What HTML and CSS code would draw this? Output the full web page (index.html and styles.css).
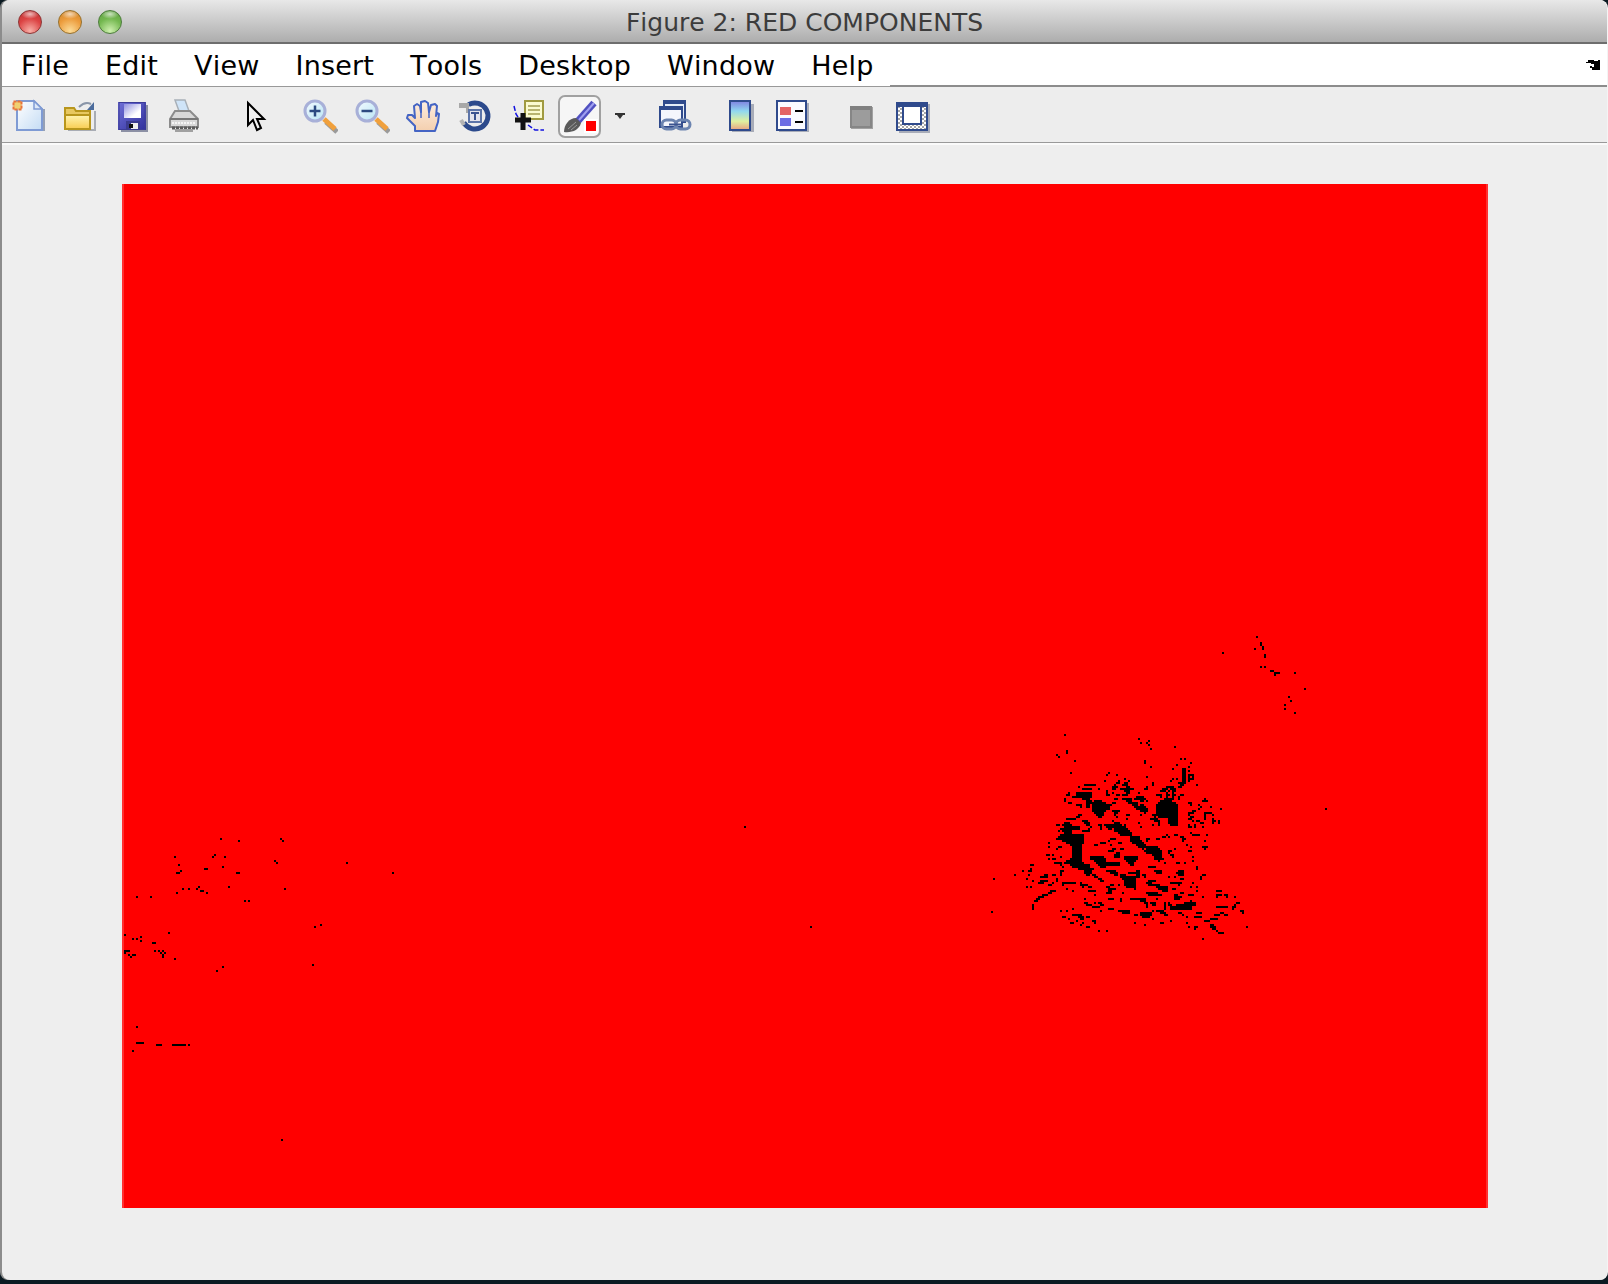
FILE: index.html
```html
<!DOCTYPE html>
<html>
<head>
    <meta charset="UTF-8"/>
    <title>Figure 2: RED COMPONENTS</title>
    <link rel="stylesheet" href="styles.css">
</head>
<body>
<div class="window">

    <div class="titlebar">
        <div class="lights">
            <span class="light light-red"></span>
            <span class="light light-amber"></span>
            <span class="light light-green"></span>
        </div>
        <div class="title">Figure 2: RED COMPONENTS</div>
        <div></div>
    </div>

    <div class="menubar">
        <nav class="menu">
            <a>File</a>
            <a>Edit</a>
            <a>View</a>
            <a>Insert</a>
            <a>Tools</a>
            <a>Desktop</a>
            <a>Window</a>
            <a>Help</a>
        </nav>
        <div class="menu-rest">
            <svg class="dock" width="14" height="10" viewBox="0 0 14 10" shape-rendering="crispEdges">
                <path d="M2 0h6v1h4v-1h2v10h-8v-2h-2v-2h2v1h2v-3h-3v-1h-5v-1h2zM0 2h1v1h-1z" fill="#000"/>
            </svg>
        </div>
    </div>

    <div class="toolbar">
        <!-- new -->
        <svg class="tool" width="36" height="36" viewBox="0 0 36 36">
            <defs>
                <linearGradient id="sheet" x1="0" y1="0" x2="1" y2="1">
                    <stop offset="0" stop-color="#fff"/>
                    <stop offset="1" stop-color="#c4dcf4"/>
                </linearGradient>
                <linearGradient id="folder" x1="0" y1="0" x2="0" y2="1">
                    <stop offset="0" stop-color="#fff4b0"/>
                    <stop offset="1" stop-color="#f8cc50"/>
                </linearGradient>
                <linearGradient id="disk" x1="0" y1="0" x2="1" y2="1">
                    <stop offset="0" stop-color="#7070d8"/>
                    <stop offset="1" stop-color="#30309c"/>
                </linearGradient>
                <linearGradient id="label" x1="0" y1="0" x2="1" y2="1">
                    <stop offset="0" stop-color="#9090e0"/>
                    <stop offset=".7" stop-color="#fff"/>
                </linearGradient>
                <linearGradient id="lens" x1="0" y1="0" x2="1" y2="1">
                    <stop offset="0" stop-color="#f4fbff"/>
                    <stop offset="1" stop-color="#b8e4f4"/>
                </linearGradient>
                <linearGradient id="skin" x1="0" y1="0" x2="0" y2="1">
                    <stop offset="0" stop-color="#fdeee0"/>
                    <stop offset="1" stop-color="#f4cfae"/>
                </linearGradient>
                <linearGradient id="rainbow" x1="0" y1="0" x2="0" y2="1">
                    <stop offset="0" stop-color="#8080e0"/>
                    <stop offset=".35" stop-color="#90d8f0"/>
                    <stop offset=".7" stop-color="#e0f0a0"/>
                    <stop offset="1" stop-color="#e8a080"/>
                </linearGradient>
                <pattern id="checks" width="4" height="4" patternUnits="userSpaceOnUse">
                    <rect width="4" height="4" fill="#fff"/>
                    <rect width="2" height="2" fill="#a8a8a8"/>
                    <rect x="2" y="2" width="2" height="2" fill="#a8a8a8"/>
                </pattern>
            </defs>
            <path d="M10 33h25v-22h-2v20h-23z" fill="#95a0b5"/>
            <path d="M7 3h17l8 8v21h-25z" fill="url(#sheet)" stroke="#7f9bd4" stroke-width="2"/>
            <path d="M24 3v8h8z" fill="#dce8f8" stroke="#7f9bd4" stroke-width="1.5"/>
            <rect x="3.500" y="3.500" width="8" height="8" fill="#f0d070" stroke="#e8743c" stroke-width="2" stroke-dasharray="3 1"/>
        </svg>
        <!-- open -->
        <svg class="tool" width="36" height="36" viewBox="0 0 36 36">
            <path d="M6 33h28v-20h-2v18h-26z" fill="#a8acb4"/>
            <path d="M3 10h9l2 3h14v18h-25z" fill="#e8c860" stroke="#b8961c" stroke-width="2"/>
            <path d="M3 17h25v14h-25z" fill="url(#folder)" stroke="#b8961c" stroke-width="2"/>
            <path d="M17 9q6-6 12-3" fill="none" stroke="#8a96a8" stroke-width="2"/>
            <path d="M32 4v8h-7z" fill="#4c6c9c"/>
        </svg>
        <!-- save -->
        <svg class="tool" width="36" height="36" viewBox="0 0 36 36">
            <path d="M7 34h27v-27h-2v25h-25z" fill="#8c90a4"/>
            <rect x="4" y="4" width="28" height="28" fill="url(#disk)"/>
            <rect x="5" y="4.500" width="26" height="27" fill="none" stroke="#3c3c98" stroke-width="1"/>
            <rect x="10" y="6" width="17" height="14" fill="url(#label)"/>
            <rect x="12" y="23" width="14" height="9" fill="#3c3c90"/>
            <rect x="17" y="25" width="7" height="6" fill="#f0f0f0"/>
            <rect x="15" y="26" width="4" height="4" fill="#111"/>
        </svg>
        <!-- print -->
        <svg class="tool" width="36" height="36" viewBox="0 0 36 36">
            <path d="M9 2h10l4 11h-10z" fill="#cfe4f8" stroke="#a8b0b8" stroke-width="1.500"/>
            <path d="M9 13h15l8 8v8h-28v-8z" fill="#d8d8d8" stroke="#8c8c8c" stroke-width="2"/>
            <path d="M4 21h28" stroke="#787878" stroke-width="2"/>
            <path d="M6 25h24" stroke="#f4f4f4" stroke-width="2" stroke-dasharray="2 1"/>
            <path d="M6 30h26" stroke="#5c5c5c" stroke-width="3" stroke-dasharray="3 1"/>
            <rect x="9" y="31" width="18" height="3" fill="#a0a0a0"/>
        </svg>

        <!-- pointer -->
        <svg class="tool tool-pointer" width="36" height="36" viewBox="0 0 36 36">
            <path d="M9 5v22l5-5 4 10 4-2-4-9h7z" fill="#f2f2f2" stroke="#000" stroke-width="2" stroke-linejoin="miter"/>
        </svg>

        <!-- zoom in -->
        <svg class="tool tool-zoom" width="36" height="36" viewBox="0 0 36 36">
            <path d="M24 24l11 10" stroke="#9a9a9a" stroke-width="5"/>
            <path d="M22 21l11 10" stroke="#f0a03c" stroke-width="5"/>
            <circle cx="13" cy="13" r="10" fill="url(#lens)" stroke="#a8b0d8" stroke-width="3"/>
            <path d="M7.500 13h11M13 7.500v11" stroke="#2c4a80" stroke-width="2.500"/>
        </svg>
        <!-- zoom out -->
        <svg class="tool" width="36" height="36" viewBox="0 0 36 36">
            <path d="M24 24l11 10" stroke="#9a9a9a" stroke-width="5"/>
            <path d="M22 21l11 10" stroke="#f0a03c" stroke-width="5"/>
            <circle cx="13" cy="13" r="10" fill="url(#lens)" stroke="#a8b0d8" stroke-width="3"/>
            <path d="M7.500 13h11" stroke="#2c4a80" stroke-width="2.500"/>
        </svg>
        <!-- pan -->
        <svg class="tool" width="36" height="36" viewBox="0 0 36 36">
            <path d="M9 33V28L1 20L2 17H6L9 20L8 8L11 6L14 8L15 14V4L19 3L22 5L23 14L25 7L29 6L31 8L30 18L31 15L33 16L32 24L29 33Z" fill="url(#skin)" stroke="#4464c4" stroke-width="2" stroke-linejoin="round"/>
            <path d="M15 14v6M23 14v6" stroke="#4464c4" stroke-width="1.500"/>
        </svg>
        <!-- rotate -->
        <svg class="tool" width="36" height="36" viewBox="0 0 36 36">
            <path d="M10.500 6.700A13 13 0 1 1 5.700 24.500" fill="none" stroke="#2c4a8c" stroke-width="5"/>
            <path d="M3 22l3 5" stroke="#b4b4b4" stroke-width="4"/>
            <path d="M1 5h10v10h-3v-5h-7z" fill="#a8a8a8"/>
            <path d="M11 12h12v12h-12z" fill="#e4e4ec" stroke="#5c74a8" stroke-width="2"/>
            <path d="M13 15h8M17 15v7" stroke="#3c5490" stroke-width="2"/>
        </svg>
        <!-- data cursor -->
        <svg class="tool" width="36" height="36" viewBox="0 0 36 36">
            <path d="M4 8l2 8 5 8" fill="none" stroke="#1010e0" stroke-width="1.500" stroke-dasharray="5 2"/>
            <path d="M18 27l7 5h9" fill="none" stroke="#1010e0" stroke-width="1.500" stroke-dasharray="5 2"/>
            <rect x="15" y="3" width="18" height="18" fill="#fbfbd0" stroke="#a09a40" stroke-width="2"/>
            <path d="M18 8h12M18 12h12M18 16h12" stroke="#b8b470" stroke-width="2"/>
            <path d="M5 22h16M13 15v17" stroke="#111" stroke-width="5"/>
        </svg>

        <!-- brush (pressed) -->
        <div class="brush-btn">
            <svg width="38" height="38" viewBox="0 0 38 38">
                <path d="M16 22l16-18" stroke="#5050c0" stroke-width="7"/>
                <path d="M17 21l15-17" stroke="#a0a0f0" stroke-width="2"/>
                <path d="M2 33c0-7 5-14 12-14l5 5c-2 7-9 10-17 9z" fill="#5a5a5a"/>
                <path d="M6 30l8-7M9 31l6-5" stroke="#9a9a9a" stroke-width="1"/>
                <rect x="22" y="20" width="14" height="14" fill="#fff"/>
                <rect x="24" y="22" width="10" height="10" fill="#f00"/>
            </svg>
        </div>
        <svg class="drop" width="12" height="6" viewBox="0 0 12 6">
            <path d="M1 0h10v2h-2l-3 4-3-4h-2z" fill="#333"/>
        </svg>

        <!-- link -->
        <svg class="tool tool-link" width="36" height="36" viewBox="0 0 36 36">
            <rect x="7" y="3" width="21" height="21" fill="#e4ecf8" stroke="#2f4a8c" stroke-width="2"/>
            <path d="M7 3h21v3h-21z" fill="#2f4a8c"/>
            <rect x="3" y="9" width="22" height="20" fill="#f4f6fc" stroke="#2f4a8c" stroke-width="2"/>
            <path d="M3 9h22v3h-22z" fill="#2f4a8c"/>
            <rect x="5" y="22" width="14" height="9" rx="4.500" fill="none" stroke="#6c84b0" stroke-width="3"/>
            <rect x="19" y="22" width="14" height="9" rx="4.500" fill="none" stroke="#6c84b0" stroke-width="3"/>
            <path d="M12 26.500h14" stroke="#3c5490" stroke-width="2"/>
        </svg>
        <!-- colorbar -->
        <svg class="tool tool-colorbar" width="36" height="36" viewBox="0 0 36 36">
            <rect x="11" y="6" width="22" height="28" fill="#a8acb8"/>
            <rect x="9" y="3" width="20" height="29" fill="url(#rainbow)" stroke="#2f4a8c" stroke-width="2"/>
        </svg>
        <!-- legend -->
        <svg class="tool tool-legend" width="36" height="36" viewBox="0 0 36 36">
            <rect x="6" y="5" width="30" height="29" fill="#a8acb8"/>
            <rect x="4" y="3" width="29" height="29" fill="#fbfbff" stroke="#2f4a8c" stroke-width="2"/>
            <rect x="7" y="9" width="11" height="8" fill="#e46464"/>
            <rect x="7" y="20" width="11" height="8" fill="#6c6ce4"/>
            <path d="M22 13h8M22 24h8" stroke="#000" stroke-width="2"/>
        </svg>

        <!-- hide tools -->
        <svg class="tool tool-hide" width="36" height="36" viewBox="0 0 36 36">
            <rect x="9" y="9" width="22" height="22" fill="#a2a2a2"/>
            <rect x="9" y="9" width="20" height="20" fill="#9c9c9c" stroke="#868686" stroke-width="2"/>
            <rect x="8" y="8" width="20" height="4" fill="#808080"/>
        </svg>
        <!-- plot tools -->
        <svg class="tool" width="36" height="36" viewBox="0 0 36 36">
            <rect x="5" y="6" width="33" height="29" fill="#a8acb8"/>
            <rect x="3" y="5" width="30" height="27" fill="url(#checks)"/>
            <rect x="9" y="8" width="18" height="18" fill="#fff" stroke="#2f4a8c" stroke-width="2"/>
            <rect x="3" y="5" width="30" height="27" fill="none" stroke="#2f4a8c" stroke-width="2"/>
            <path d="M3 7.500h30" stroke="#2f4a8c" stroke-width="3"/>
        </svg>
    </div>

    <div class="figure">
        <div class="plot">
            <svg width="1362" height="1024" viewBox="124 184 1362 1024" shape-rendering="crispEdges">
                <!-- main cluster -->
                <g transform="translate(1000 720) scale(.333333)" fill="none" stroke="#000" stroke-width="6">
                    <path d="M192 45h6M414 57h6M420 69h6M438 69h6M444 63h6M444 75h6M450 87h6M522 81h6M198 93h6M198 99h6M168 105h6M174 111h6M222 123h6M432 123h6M432 129h6M450 141h6M540 117h6M552 117h6M570 129h6M528 135h6M516 147h6M210 159h6M324 159h6M318 165h6M348 165h6M438 171h6M312 183h6M372 177h6M384 183h6"/>
                    <path d="M546 147h12M546 153h12M546 159h12M546 165h12M546 171h12M546 177h12M546 183h12M546 189h12M564 165h18M564 171h6M576 171h6M564 177h18M564 183h6M516 177h6M510 183h6M528 177h6M564 153h6M564 141h6M588 195h6M534 189h18M540 195h12M534 201h12"/>
                    <path d="M354 183h6M348 189h12M342 195h6M372 189h12M336 201h18M366 195h18M360 207h42M336 207h12M378 201h12M432 207h12M438 201h6M456 189h6M456 195h6M372 213h18M336 219h6M378 219h12M318 213h6M318 225h12M348 225h12M366 225h18M414 219h6M408 231h24M342 237h12M366 237h30M402 237h36M336 249h12M378 243h18M420 243h12M438 243h6M384 249h30M330 255h6M396 255h18M420 255h12M402 261h36M408 267h36M420 273h24M336 273h24M342 279h12M342 285h6M432 279h6M378 285h12M420 285h6"/>
                    <path d="M264 195h24M252 195h12M234 201h6M246 207h30M204 219h6M228 219h48M198 225h12M228 225h48M192 237h6M192 243h6M216 231h60M246 237h24M204 249h12M228 255h18M240 261h6M258 243h18M258 249h18M258 255h12M258 261h12M294 207h6M318 219h6"/>
                    <path d="M282 243h24M276 249h42M276 255h54M276 261h54M276 267h54M276 273h42M282 279h30M288 285h24M294 291h12"/>
                    <path d="M498 201h24M486 207h18M510 207h18M480 213h18M504 213h6M516 213h12M498 219h6M516 219h6M468 225h18M498 225h12M516 225h12M540 225h12M480 231h6M498 231h6M516 231h6M534 231h6M492 237h30M534 237h6M480 243h36M474 249h54M468 255h66M468 261h66M468 267h66M468 273h66M468 279h66M468 285h66M474 291h60M504 297h30M504 303h30M504 309h30M510 315h24M456 285h12M462 291h6M450 297h24M462 303h18M474 309h6M474 315h6M456 315h6"/>
                    <path d="M564 249h12M570 255h6M606 243h12M612 237h6M618 243h6M594 255h6M600 261h6M576 273h12M564 279h18M594 267h6M630 261h6M660 267h6M564 285h6M570 291h12M564 297h12M612 279h24M612 285h6M630 279h6M612 291h6M636 285h6M612 297h6M576 303h6M588 303h12M600 309h12M636 297h6M636 303h12M654 303h6M636 309h6M654 309h6M564 315h6M564 321h12M582 315h6M582 321h6M606 321h6M570 339h6M576 345h24M618 345h6M612 363h6M540 351h12M546 357h12M546 363h6M504 351h6M486 351h12M468 357h12M498 345h6M522 345h12M612 381h12M612 387h6M558 375h6M570 381h6M564 393h12M522 387h6M504 393h12M504 399h6M510 405h12M516 411h6M576 411h6M492 429h6M528 429h12M552 429h6M576 423h6M588 441h6M588 447h6M606 465h12M600 471h6M600 477h6M606 381h6"/>
                    <path d="M312 315h30M342 309h18M318 321h24M342 315h24M324 327h12M342 321h36M342 327h42M342 333h48M354 339h42M360 345h36M246 303h18M252 309h18M258 315h12M294 315h12M300 321h6M300 327h6M372 315h6M378 297h6M414 309h6M420 321h6M336 303h6M348 291h6M378 285h12"/>
                    <path d="M390 351h30M390 357h30M390 363h36M396 369h36M408 375h30M414 381h24M426 387h6M438 357h12M438 363h6M438 381h36M438 387h42M432 393h54M438 399h48M456 405h30M462 411h24M462 417h30M474 423h6M372 411h42M372 417h42M378 423h30M384 429h18M390 435h12"/>
                    <path d="M198 297h12M210 297h18M168 315h12M192 309h18M186 315h30M192 321h48M180 327h60M174 333h6M186 333h30M192 339h24M180 345h72M174 351h78M168 357h84M186 363h66M198 369h54M210 375h36M216 381h30M216 387h30M216 393h30M216 399h30M216 405h30M216 411h30M210 417h36M198 423h48M192 429h60M210 435h60M216 441h36M234 447h42M252 453h24M252 459h24M258 465h12M228 291h12M234 285h12M174 381h12M168 387h6M144 369h6M144 381h6M138 405h12M144 417h6M156 405h6M156 417h12M180 411h6M162 429h24M180 435h6M186 441h6M180 453h12M180 459h6M180 465h6M246 333h24M264 327h6M270 321h6M282 375h12M300 369h18M324 363h6M330 357h12M342 357h6M330 375h6M354 369h12"/>
                    <path d="M270 411h42M270 417h48M282 423h36M288 429h66M294 435h66M300 441h18M318 435h42M330 429h30M342 411h18M342 405h18M348 399h12M360 387h12M336 387h12M324 393h18M318 453h30M330 459h24M342 465h12M246 441h24M252 447h30M276 465h12M282 471h12M294 477h12M300 483h12M360 465h18M360 471h48M366 477h42M372 483h36M372 489h36M372 495h36M378 501h30M402 507h6M408 453h12M408 459h12M408 465h12M408 471h12M384 459h24M444 441h24M462 453h24M468 459h18M426 465h12M432 471h6M444 483h24M438 489h18M444 495h36M468 501h36M474 507h30M486 513h18M510 489h24M534 453h18M528 459h24M534 465h18M522 471h6M540 477h12M504 471h6M534 489h12M534 495h6M516 507h12"/>
                    <path d="M132 465h12M120 471h24M156 465h12M84 453h12M84 465h6M90 435h12M66 453h6M90 447h6M42 465h6M78 477h6M96 483h6M78 501h6M90 501h6M114 489h18M120 483h24M156 489h6M168 477h6M168 483h6M144 495h12M186 489h42M186 495h6M198 507h6M240 489h6M240 495h18M246 501h6M258 495h6M264 501h12M264 513h18M216 513h6M282 513h6M282 525h6M150 513h18M144 519h12M126 525h18M114 531h18M108 537h12M102 543h12M96 555h6M96 561h6M96 567h6"/>
                    <path d="M318 501h12M324 507h24M330 495h12M318 519h18M324 513h12M354 495h6M366 519h6M324 537h18M360 537h6M360 543h6M252 537h6M252 549h12M258 555h18M276 561h24M282 549h6M294 549h12M300 555h12M390 537h48M420 543h18M432 549h12M438 555h6M438 561h6M438 519h36M444 525h42M468 537h6M450 549h18M456 555h12M492 549h6M492 555h6M492 561h6M492 567h6M504 549h6M504 555h12M510 561h66M510 567h66M528 555h60M552 549h36M570 543h6M522 525h12M522 531h24M540 519h12M522 537h18M564 525h18M606 531h6M570 501h6M576 489h6M588 501h6M588 513h6M648 513h18M648 525h18M648 531h6M672 525h12M678 531h6M702 531h6M708 549h12M702 555h6M696 561h12M648 561h36M696 567h6M720 573h12M726 579h6"/>
                    <path d="M180 573h6M198 573h6M216 567h6M216 585h30M234 591h18M240 597h12M186 591h12M204 597h6M210 609h12M228 603h6M246 609h6M258 591h12M276 603h12M282 609h6M258 621h12M240 615h6M294 633h6M318 633h6M300 573h6M324 567h12M336 567h6M354 573h36M366 579h24M402 585h12M420 579h36M420 585h36M426 591h24M456 573h6M468 573h24M480 579h18M492 585h12M456 597h6M480 609h12M510 603h6M402 609h6M432 615h6M534 579h12M546 585h6M558 591h6M588 579h18M582 591h24M558 609h6M564 621h6M582 621h12M582 627h6M612 603h18M630 597h6M642 585h18M636 597h18M660 579h12M672 585h12M630 615h12M630 621h18M636 627h12M648 633h6M654 639h18M606 657h6M738 621h6"/>
                </g>
                <!-- upper right specks -->
                <g transform="translate(1200 620) scale(.333333)" fill="none" stroke="#000" stroke-width="6">
                    <path d="M168 51h6M180 69h6M180 75h6M186 81h6M186 87h6M162 87h6M66 99h6M192 105h6M192 111h6M180 141h6M192 141h6M210 153h12M222 159h18M222 165h6M282 159h6M312 207h6M264 231h6M270 243h6M252 255h6M252 267h6M282 279h6"/>
                </g>
                <!-- lower left specks -->
                <g transform="translate(110 820) scale(.333333)" fill="none" stroke="#000" stroke-width="6">
                    <path d="M330 57h6M384 63h6M510 57h6M516 63h6M192 111h6M306 111h6M312 105h6M342 111h6M492 123h6M498 129h6M708 129h6M204 135h6M336 141h6M210 153h6M198 159h12M282 147h12M378 159h12M846 159h6M354 201h6M522 207h6M216 207h6M234 207h6M258 207h6M264 201h6M270 213h12M288 219h6M198 219h6M78 231h6M120 231h6M402 243h6M414 243h6M612 321h6M630 315h6M174 339h6M42 345h6M66 357h6M78 357h6M90 351h6M90 363h6M126 369h12M132 393h6M144 393h6M156 393h6M150 399h6M162 399h6M156 405h6M156 411h6M42 393h18M42 399h6M54 405h6M60 411h6M66 405h12M192 417h6M318 453h6M336 441h6M606 435h6M78 621h6M78 669h24M138 675h18M186 675h42M234 675h6M66 693h6"/>
                </g>
                <!-- lone specks -->
                <path d="M744 827h2M810 927h2M281 1140h2M1325 809h2M993 879h2M991 912h2" fill="none" stroke="#000" stroke-width="2"/>
            </svg>
        </div>
    </div>

</div>
</body>
</html>
```
FILE: styles.css
```css
html, body {
    margin: 0;
    height: 1284px;
    overflow: hidden;
}

body {
    background: #0b1a22;
    font-family: "DejaVu Sans", sans-serif;
    font-kerning: none;
}

.window {
    width: 1605px;
    height: 1280px;
    margin-left: 2px;
    background: #eee;
    border-radius: 8px;
    box-shadow: -2px 0 0 #8c8c8c, 1px 0 0 #f4f4f4;
    overflow: hidden;
}

/* title bar */
.titlebar {
    display: grid;
    grid-template-columns: 1fr auto 1fr;
    align-items: center;
    height: 42px;
    background: linear-gradient(#e8e8e8, #adadad);
    border-bottom: 2px solid #6e6e6e;
}

.lights {
    display: flex;
    gap: 16px;
    padding-left: 16px;
    padding-top: 2px;
}

.light {
    width: 22px;
    height: 22px;
    border-radius: 50%;
    border: 1px solid #777;
}

.light-red {
    background: radial-gradient(ellipse 40% 22% at 50% 14%, rgba(255, 255, 255, .65), transparent),
        radial-gradient(circle at 50% 90%, #f8b0a8, #dc4444 55%, #b83030 100%);
    border-color: #8c3434;
}

.light-amber {
    background: radial-gradient(ellipse 40% 22% at 50% 14%, rgba(255, 255, 255, .65), transparent),
        radial-gradient(circle at 50% 90%, #fcdc98, #ec9c3c 55%, #c88028 100%);
    border-color: #96702c;
}

.light-green {
    background: radial-gradient(ellipse 40% 22% at 50% 14%, rgba(255, 255, 255, .65), transparent),
        radial-gradient(circle at 50% 90%, #cff0b0, #74b850 55%, #5c9c40 100%);
    border-color: #4c7c3c;
}

.title {
    font-size: 25px;
    color: #3c3c3c;
    padding-top: 3px;
}

/* menu bar */
.menubar {
    display: flex;
    height: 43px;
    background: #fff;
}

.menu {
    display: flex;
    gap: 36px;
    width: 888px;
    box-sizing: border-box;
    padding: 3px 0 0 19px;
    font-size: 27px;
    line-height: 38px;
    letter-spacing: .2px;
    color: #000;
    border-bottom: 1px solid #999;
}

.menu-rest {
    flex: 1;
    display: flex;
    justify-content: flex-end;
    padding: 16px 7px 0 0;
    border-bottom: 2px solid #8c8c8c;
    align-items: flex-start;
}

/* toolbar */
.toolbar {
    display: flex;
    align-items: center;
    gap: 16px;
    height: 52px;
    margin-top: 3px;
    padding-left: 8px;
    background: #ededed;
    border-bottom: 1px solid #999;
}

.tool {
    flex: none;
}

.tool-pointer {
    margin-left: 21px;
}

.tool-zoom {
    margin-left: 11px;
}

.brush-btn {
    flex: none;
    box-sizing: border-box;
    width: 43px;
    height: 43px;
    margin-left: -4px;
    padding: 2px;
    background: #f6f6f6;
    border: 2px solid #a0a0a0;
    border-radius: 7px;
}

.drop {
    margin-left: -3px;
}

.tool-link {
    margin-left: 15px;
}

.tool-colorbar {
    margin-left: 12px;
}

.tool-hide {
    margin-left: 17px;
}

/* figure area */
.figure {
    border-top: 2px solid #fafafa;
    padding: 39px 0 0 120px;
}

.plot {
    width: 1362px;
    height: 1024px;
    background: #f00;
    border-left: 2px solid #ff3030;
    border-right: 2px solid #ff3030;
}

.plot svg {
    display: block;
}
```
